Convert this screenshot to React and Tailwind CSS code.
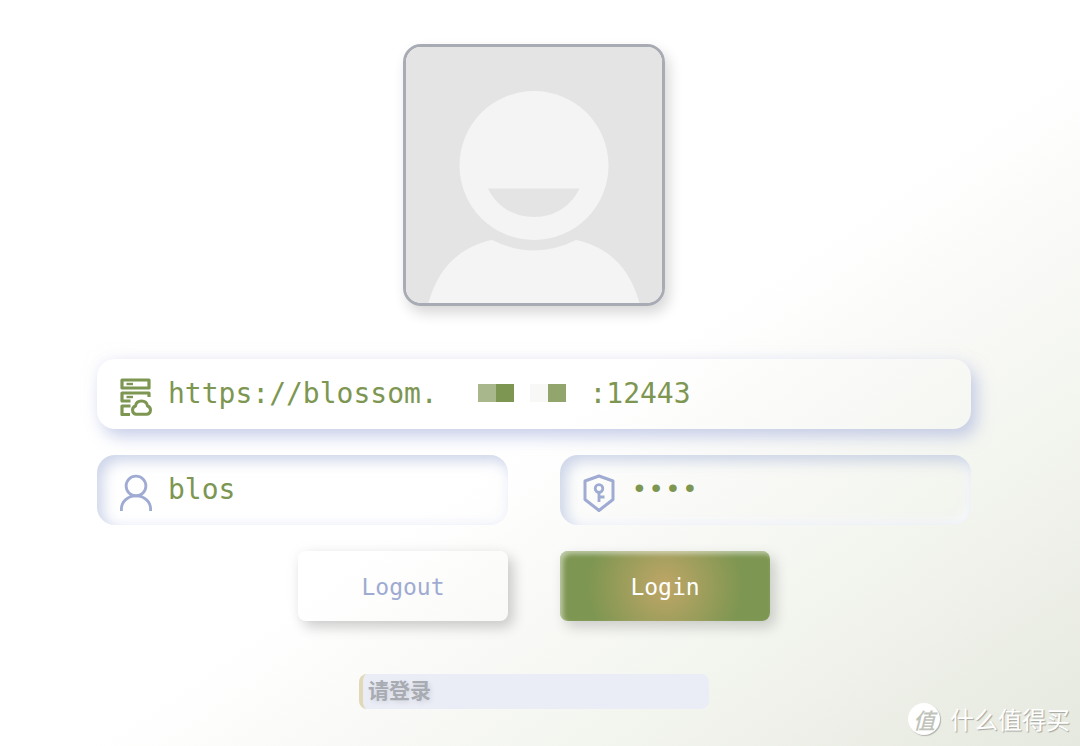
import { useState } from 'react'

const MONO = "font-['DejaVu_Sans_Mono','Noto_Sans_CJK_SC',monospace]"

// raised panel / sunken panel
const RAISED = 'shadow-[6px_8px_16px_rgba(160,172,218,0.55),-3px_-3px_12px_rgba(240,242,249,0.5)]'
const SUNKEN = 'shadow-[inset_6px_6px_14px_rgba(165,180,215,0.55),inset_-4px_-4px_12px_rgba(250,251,255,0.9)]'

const FIELD_INPUT = 'w-full min-w-0 bg-transparent text-[28px] leading-9 text-[#7d9651] outline-none'

function Avatar() {
  return (
    <svg viewBox="0 0 256 256" role="img" aria-label="Avatar" className="block size-full">
      <rect width="256" height="256" fill="#e4e4e4" />
      <path d="M22 258C32 218 57 199 86 193Q128 214 170 193C199 199 224 218 234 258Z" fill="#f4f4f4" />
      <circle cx="128" cy="118.500" r="74.500" fill="#f4f4f4" />
      <path d="M82 141.500H173.500C165 159 149 170 128 170S90.500 159 82 141.500Z" fill="#e4e4e4" />
    </svg>
  )
}

function ServerIcon() {
  return (
    <svg viewBox="0 0 32 38" fill="none" stroke="#7d9651" strokeWidth="3.200" strokeLinejoin="round" className="h-[38px] w-8 shrink-0" aria-hidden="true">
      <path d="M2 2H29V10H2Z" />
      <path d="M6.500 6H13" strokeWidth="2.400" />
      <path d="M29 19V15H2V23H10.500" />
      <path d="M6.500 19H13" strokeWidth="2.400" />
      <path d="M10.500 28H2V36.500H10" />
      <path d="M16 36.300A4.300 4.300 0 0 1 15.500 28C16 24.500 18.500 23 21.500 23S27 25 27.500 28A4.300 4.300 0 0 1 27 36.300Z" strokeWidth="3" />
    </svg>
  )
}

function UserIcon() {
  return (
    <svg viewBox="0 0 34 38" fill="none" stroke="#9fabd2" strokeWidth="3" className="h-[38px] w-8 shrink-0" aria-hidden="true">
      <circle cx="17" cy="11.500" r="10.500" />
      <path d="M1.500 38V36C1.500 28 8.500 22 17 22S32.500 28 32.500 36V38" />
    </svg>
  )
}

function ShieldIcon() {
  return (
    <svg viewBox="0 0 32 38" fill="none" stroke="#9fabd2" strokeWidth="3" strokeLinejoin="round" className="h-[38px] w-8 shrink-0" aria-hidden="true">
      <path d="M16 2L30 7V25.500L16 36.500L2 25.500V7Z" />
      <circle cx="16" cy="14.500" r="3.800" strokeWidth="2.800" />
      <path d="M16 18V28M16 23H21.500" strokeWidth="2.800" />
    </svg>
  )
}

function Field({ id, label, icon, className, inputClass = '', children, ...props }) {
  return (
    <div className={`relative flex h-[70px] items-center gap-4 rounded-[18px] pr-5 pl-[23px] ${className}`}>
      <label htmlFor={id} aria-label={label} className="w-8 shrink-0 pt-1.5">{icon}</label>
      <input id={id} className={`${FIELD_INPUT} ${inputClass}`} autoComplete="off" spellCheck={false} {...props} />
      {children}
    </div>
  )
}

export default function App() {
  const [url, setUrl] = useState('https://blossom.' + ' '.repeat(9) + ':12443')
  const [username, setUsername] = useState('blos')
  const [password, setPassword] = useState('blos')

  return (
    <main className={`relative min-h-screen bg-white bg-linear-to-br from-white from-54% via-[#f3f5ef] via-77% to-[#e6e9df] pt-11 pr-[109px] pb-9 pl-[97px] ${MONO}`}>
      <form onSubmit={e => e.preventDefault()} className="flex flex-col items-center">
        {/* Avatar */}
        <div className="size-[262px] overflow-hidden rounded-[18px] border-3 border-[#a8abb4] shadow-[4px_7px_14px_rgba(0,0,0,0.16)]">
          <Avatar />
        </div>

        {/* Server address */}
        <div className="mt-[53px] w-full">
          <Field
            id="url"
            label="Server"
            icon={<ServerIcon />}
            className={RAISED}
            value={url}
            onChange={e => setUrl(e.target.value)}
          >
            {/* Hidden part of the host name */}
            <div className="pointer-events-none absolute top-[25px] left-[381px] flex" aria-hidden="true">
              <span className="size-[18px] bg-[#a9b78c]" />
              <span className="size-[18px] bg-[#7d9651]" />
              <span className="ml-4 size-[18px] bg-[#f8f8f7]" />
              <span className="size-[18px] bg-[#92a56d]" />
            </div>
          </Field>
        </div>

        {/* Credentials */}
        <div className="mt-[26px] grid w-full grid-cols-2 gap-x-[52px] gap-y-[26px]">
          <Field
            id="username"
            label="Username"
            icon={<UserIcon />}
            className={SUNKEN}
            value={username}
            onChange={e => setUsername(e.target.value)}
          />
          <Field
            id="password"
            label="Password"
            type="password"
            icon={<ShieldIcon />}
            className={SUNKEN}
            inputClass="font-['Liberation_Mono',monospace]"
            value={password}
            onChange={e => setPassword(e.target.value)}
          />
          <button
            type="button"
            className="h-[70px] w-[210px] justify-self-end rounded-lg pt-0.5 text-[23px] text-[#9fabd2] shadow-[5px_6px_14px_rgba(0,0,0,0.2),-4px_-4px_16px_rgba(0,0,0,0.02)]"
          >
            Logout
          </button>
          <button
            type="submit"
            className="h-[70px] w-[210px] rounded-lg bg-[radial-gradient(circle,#bfa667_0%,#7d9651_70%)] pt-0.5 text-[23px] text-white shadow-[5px_6px_14px_rgba(0,0,0,0.18),inset_3px_3px_5px_rgba(255,255,255,0.5)]"
          >
            Login
          </button>
        </div>

        {/* Status */}
        <p className="mt-[53px] h-[35px] w-[350px] rounded-lg border-l-4 border-[#e1d8b8] bg-[#eaedf6] pl-[5px] text-[21px] leading-[35px] font-bold text-[#a8abb2] [text-shadow:2px_2px_5px_rgba(0,0,0,0.1)]">
          请登录
        </p>
      </form>

      {/* Watermark */}
      <div className="absolute right-[10px] bottom-[11px] flex items-center gap-2.5 font-['Noto_Sans_CJK_SC',sans-serif] text-white [text-shadow:1px_1px_1px_rgba(0,0,0,0.3)]">
        <span className="flex size-8 items-center justify-center rounded-full bg-white text-[22px] leading-8 font-medium text-[#c0c3ba] italic shadow-[1px_1px_1px_rgba(0,0,0,0.25)] [text-shadow:none]">
          值
        </span>
        <span className="text-[24px] leading-8">什么值得买</span>
      </div>
    </main>
  )
}
